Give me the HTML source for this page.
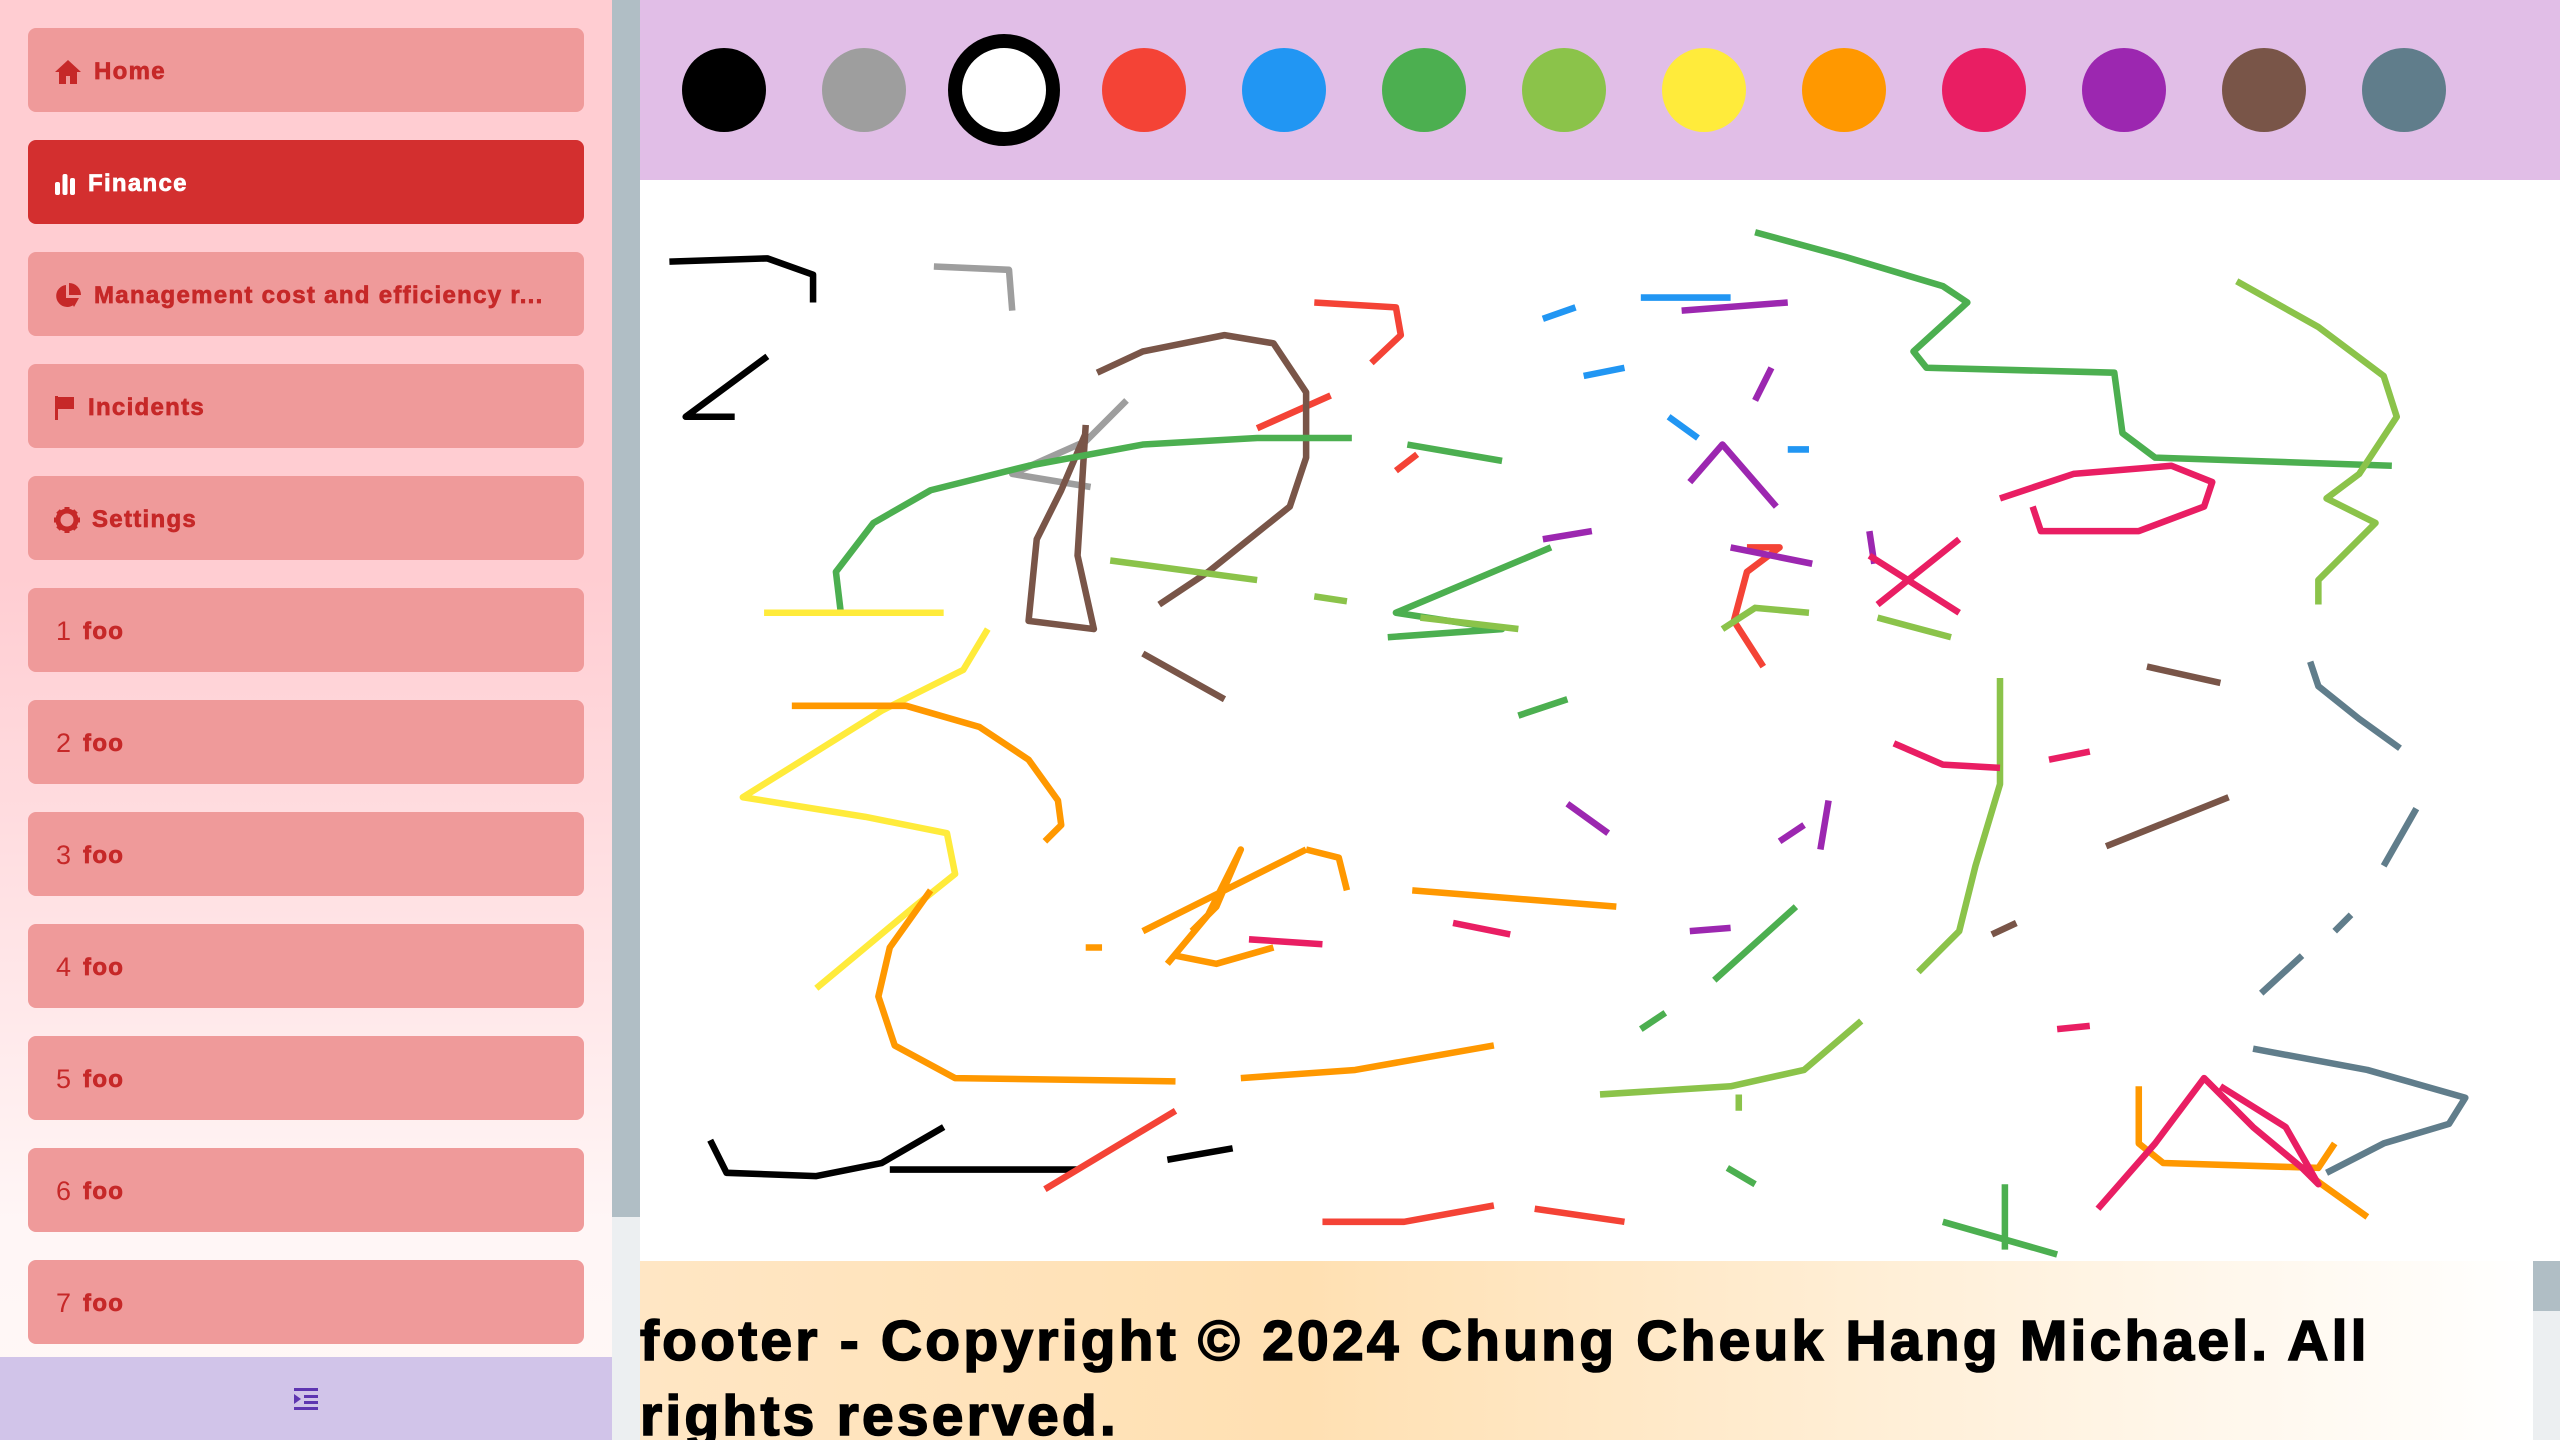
<!DOCTYPE html>
<html><head><meta charset="utf-8"><style>
*{box-sizing:border-box;margin:0;padding:0}
body{width:2560px;height:1440px;overflow:hidden;font-family:"Liberation Sans",sans-serif;position:relative;background:#fff}
#side{position:absolute;left:0;top:0;width:612px;height:1440px;background:linear-gradient(#ffcdd2,#ffcdd2 40%,#fff6f6 85%,#fff8f5)}
.btn{position:absolute;left:28px;width:556px;height:84px;background:#ef9a9a;border-radius:8px;color:#c62828;font-weight:bold;font-size:24px;letter-spacing:1.3px;-webkit-text-stroke:0.7px currentColor;display:flex;align-items:center;padding-left:26px;padding-top:3px;white-space:nowrap;overflow:hidden}
.btn svg{margin-right:12px;flex:none}
.btn.act{background:#d32f2f;color:#fff}
.btn .n{font-weight:normal;font-size:27px;margin-right:12px;margin-left:2px;letter-spacing:0;-webkit-text-stroke:0}
#bot{position:absolute;left:0;top:1357px;width:612px;height:83px;background:#d1c4e9;display:flex;align-items:center;justify-content:center}
#sb{position:absolute;left:612px;top:0;width:28px;height:1440px;background:#eceff1}
#sb div{width:28px;height:1217px;background:#b0bec5}
#hdr{position:absolute;left:640px;top:0;width:1920px;height:180px;background:#e1bee7}
.c{position:absolute;top:48px;width:84px;height:84px;border-radius:50%}
#cv{position:absolute;left:640px;top:180px;width:1920px;height:1081px}
#ft{position:absolute;left:640px;top:1261px;width:1893px;height:179px;background:linear-gradient(to right,#ffe6c4,#ffe0b2 35%,#fff 100%);font-weight:bold;font-size:57px;letter-spacing:3.2px;-webkit-text-stroke:1.6px #000;line-height:75px;padding-top:43px;color:#000;overflow:hidden}
#sb2{position:absolute;left:2533px;top:1261px;width:27px;height:179px;background:#eceff1}
#sb2 div{height:50px;background:#b0bec5}
</style></head><body>
<div id="side">
<div class="btn" style="top:28px"><svg width="28" height="26" viewBox="0 0 28 26"><path d="M14 1L1 13h4v12h7v-8h4v8h7V13h4z" fill="#c62828"/></svg>Home</div>
<div class="btn act" style="top:140px"><svg width="22" height="24" viewBox="0 0 22 24"><rect x="1" y="10" width="5" height="13" rx="2" fill="#fff"/><rect x="8.5" y="2" width="5" height="21" rx="2" fill="#fff"/><rect x="16" y="6" width="5" height="17" rx="2" fill="#fff"/></svg>Finance</div>
<div class="btn" style="top:252px"><svg width="28" height="28" viewBox="0 0 28 28"><path d="M12 3A11 11 0 1 0 24 16H12z" fill="#c62828"/><path d="M15 1v12h12A12 12 0 0 0 15 1z" fill="#c62828"/><path d="M15 16h10l-5 9z" fill="#c62828"/></svg>Management cost and efficiency r...</div>
<div class="btn" style="top:364px"><svg width="22" height="26" viewBox="0 0 22 26"><rect x="1" y="1" width="3" height="24" fill="#c62828"/><path d="M4 2h16v12H4z" fill="#c62828"/></svg>Incidents</div>
<div class="btn" style="top:476px"><svg width="26" height="26" viewBox="0 0 26 26"><circle cx="13" cy="13" r="9" fill="none" stroke="#c62828" stroke-width="5"/><g stroke="#c62828" stroke-width="5"><path d="M13 0v6M13 20v6M0 13h6M20 13h6M4 4l4 4M18 18l4 4M4 22l4-4M18 8l4-4"/></g></svg>Settings</div>
<div class="btn" style="top:588px"><span class="n">1</span>foo</div>
<div class="btn" style="top:700px"><span class="n">2</span>foo</div>
<div class="btn" style="top:812px"><span class="n">3</span>foo</div>
<div class="btn" style="top:924px"><span class="n">4</span>foo</div>
<div class="btn" style="top:1036px"><span class="n">5</span>foo</div>
<div class="btn" style="top:1148px"><span class="n">6</span>foo</div>
<div class="btn" style="top:1260px"><span class="n">7</span>foo</div>
</div>
<div id="bot"><svg width="26" height="26" viewBox="0 0 26 26" fill="#5e35b1"><rect x="1" y="2" width="24" height="3"/><rect x="1" y="21" width="24" height="3"/><rect x="11" y="9" width="14" height="3"/><rect x="11" y="15" width="14" height="3"/><path d="M1 8l7 5-7 5z"/></svg></div>
<div id="sb"><div></div></div>
<div id="hdr">
<div class="c" style="left:42px;background:#000"></div>
<div class="c" style="left:182px;background:#9e9e9e"></div>
<div class="c" style="left:308px;top:34px;width:112px;height:112px;background:#fff;border:14px solid #000"></div>
<div class="c" style="left:462px;background:#f44336"></div>
<div class="c" style="left:602px;background:#2196f3"></div>
<div class="c" style="left:742px;background:#4caf50"></div>
<div class="c" style="left:882px;background:#8bc34a"></div>
<div class="c" style="left:1022px;background:#ffeb3b"></div>
<div class="c" style="left:1162px;background:#ff9800"></div>
<div class="c" style="left:1302px;background:#e91e63"></div>
<div class="c" style="left:1442px;background:#9c27b0"></div>
<div class="c" style="left:1582px;background:#795548"></div>
<div class="c" style="left:1722px;background:#607d8b"></div>
</div>
<svg id="cv" viewBox="392 110 1176 662" preserveAspectRatio="none" fill="none" stroke-width="4" stroke-linejoin="round">
<g stroke="#000"><path d="M410,160 L470,158 L498,168 L498,185M470,218 L420,255 L450,255M435,698 L445,718 L500,720 L540,712 L578,690M545,716 L660,716M715,710 L755,703"/></g>
<g stroke="#9e9e9e"><path d="M572,163 L618,165 L620,190M690,245 L665,270 L620,290 L668,298"/></g>
<g stroke="#f44336"><path d="M805,185 L855,188 L858,205 L840,222M770,262 L815,242M855,288 L868,278M1070,335 L1090,335 L1070,350 L1062,380 L1080,408M640,728 L720,680M810,748 L860,748 L915,738M940,740 L995,748"/></g>
<g stroke="#795548"><path d="M672,228 L700,215 L750,205 L780,210 L800,240 L800,280 L790,310 L740,350 L710,370M665,265 L650,300 L635,330 L630,380 L670,385 L660,340 L665,260M700,400 L750,428M1315,408 L1360,418M1290,518 L1365,488M1220,572 L1235,565"/></g>
<g stroke="#4caf50"><path d="M515,375 L512,350 L535,320 L570,300 L630,285 L700,272 L770,268 L828,268M862,272 L920,282M1075,142 L1130,157 L1190,175 L1205,185 L1172,215 L1180,225 L1295,228 L1300,265 L1320,280 L1465,285M850,390 L920,385 L855,375 L950,335M930,438 L960,428M1050,600 L1100,555M1005,630 L1020,620M1058,715 L1075,725M1190,748 L1260,768M1228,725 L1228,765"/></g>
<g stroke="#8bc34a"><path d="M1370,172 L1420,200 L1460,230 L1468,255 L1445,290 L1425,305 L1455,320 L1420,355 L1420,370M680,343 L770,355M805,365 L825,368M1108,375 L1075,372 L1055,385M1150,378 L1195,390M1225,415 L1225,480 L1210,530 L1200,570 L1175,595M980,670 L1060,665 L1105,655 L1140,625M1065,670 L1065,680M870,378 L930,385"/></g>
<g stroke="#ffeb3b"><path d="M468,375 L578,375M605,385 L590,410 L540,435 L500,460 L455,488 L530,500 L580,510 L585,535 L560,555 L530,580 L500,605"/></g>
<g stroke="#2196f3"><path d="M945,195 L965,188M1005,182 L1060,182M970,230 L995,225M1022,255 L1040,268M1095,275 L1108,275"/></g>
<g stroke="#9c27b0"><path d="M1030,190 L1095,185M1085,225 L1075,245M1035,295 L1055,272 L1088,310M945,330 L975,325M1060,335 L1110,345M1145,325 L1148,345M960,492 L985,510M1120,490 L1115,520M1035,570 L1060,568M1090,515 L1105,505"/></g>
<g stroke="#ff9800"><path d="M485,432 L555,432 L600,445 L630,465 L648,490 L650,505 L640,515M570,545 L545,580 L538,610 L548,640 L585,660 L720,662M760,660 L830,655 L915,640M700,570 L760,540 L800,520M715,590 L740,560 L760,520 L745,555 L730,570M720,585 L745,590 L780,580M665,580 L675,580M800,520 L820,525 L825,545M865,545 L990,555M1310,665 L1310,700 L1325,712 L1420,715 L1430,700M1415,720 L1450,745"/></g>
<g stroke="#e91e63"><path d="M1145,340 L1200,375M1150,370 L1200,330M1160,455 L1190,468 L1225,470M1255,465 L1280,460M1225,305 L1270,290 L1330,285 L1355,295 L1350,310 L1310,325 L1250,325 L1245,310M765,575 L810,578M890,565 L925,572M1285,740 L1320,700 L1350,660 L1380,690 L1410,715 L1420,725 L1400,690 L1360,665M1260,630 L1280,628"/></g>
<g stroke="#607d8b"><path d="M1415,405 L1420,420 L1445,440 L1470,458M1480,495 L1460,530M1440,560 L1430,570M1410,585 L1385,608M1380,642 L1450,655 L1510,672 L1500,688 L1460,700 L1425,718"/></g>
</svg>
<div id="ft">footer - Copyright © 2024 Chung Cheuk Hang Michael. All rights reserved.</div>
<div id="sb2"><div></div></div>
</body></html>
